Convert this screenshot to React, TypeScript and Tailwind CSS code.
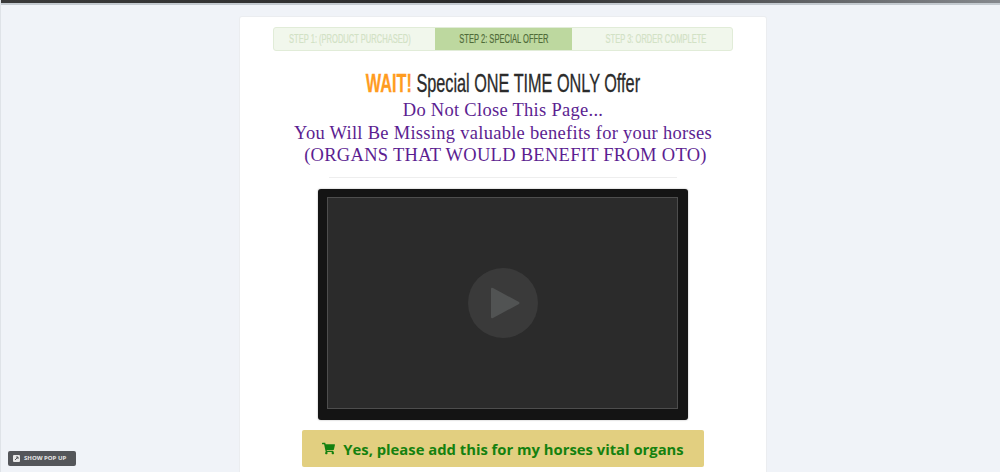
import { FaShoppingCart } from 'react-icons/fa'

const condensed = "font-['Liberation_Sans',sans-serif]"

function StepBar() {
  return (
    <div className={`flex h-[24px] w-[460px] overflow-hidden rounded-[3px] border border-[#e1ecd8] bg-[#f1f7ec] text-[13px] uppercase ${condensed}`}>
      <div className="flex w-[161px] min-w-0 shrink-0 items-center justify-center pr-[10px] text-[#d2e2c5]">
        <span className="inline-block shrink-0 origin-center scale-x-[0.58] whitespace-nowrap [-webkit-text-stroke:0.2px]">Step 1: (Product Purchased)</span>
      </div>
      <div className="flex w-[137px] min-w-0 shrink-0 items-center justify-center bg-[#bdd89f] text-[#4f6b38]">
        <span className="inline-block shrink-0 origin-center scale-x-[0.58] whitespace-nowrap [-webkit-text-stroke:0.2px]">Step 2: Special Offer</span>
      </div>
      <div className="flex min-w-0 flex-1 items-center justify-center pl-[7px] text-[#d2e2c5]">
        <span className="inline-block shrink-0 origin-center scale-x-[0.58] whitespace-nowrap [-webkit-text-stroke:0.2px]">Step 3: Order Complete</span>
      </div>
    </div>
  )
}

function VideoBox() {
  return (
    <div className="h-[231px] w-[370px] rounded-[3px] bg-[#141414] pb-[11px] pl-[9px] pr-[10px] pt-[8px] shadow-[0_0_2px_rgba(0,0,0,0.35)]">
      <div className="flex h-full items-center justify-center border border-[#4d4d4d] bg-[#2b2b2b]">
        <div className="flex h-[70px] w-[70px] items-center justify-center rounded-full bg-[#3a3a3a]">
          <svg width="30" height="34" viewBox="0 0 30 34" className="ml-[6px]">
            <path d="M2 2 L28 16 Q29 17 28 18 L2 32 Q0 33 0 31 L0 3 Q0 1 2 2 Z" fill="#515353" />
          </svg>
        </div>
      </div>
    </div>
  )
}

export default function App() {
  return (
    <div className="relative h-[472px] w-[1000px] overflow-hidden border-l border-[#dfe3e8] bg-[#f0f3f8]">
      <div className="h-[3px] bg-gradient-to-r from-[#3a3a3a] via-[#2a2a2a] to-[#85888d]" />
      <div className="h-[2px] bg-[#c4cad0]" />
      <div className="ml-[239px] mt-[12px] flex h-[600px] w-[526px] flex-col items-center rounded-[2px] bg-white pt-[10px] shadow-[0_0_0_1px_#ebedf0]">
        <StepBar />

        <h1 className={`mt-[17px] h-[30px] whitespace-nowrap text-[25px] leading-[30px] text-[#2b2b2b] ${condensed}`}>
          <span className="inline-block origin-center scale-x-[0.65] [-webkit-text-stroke:0.3px]">
            <span className="font-bold text-[#ff9c1f]">WAIT!</span> Special ONE TIME ONLY Offer
          </span>
        </h1>

        <div className="mt-[1px] text-center font-['Liberation_Serif',serif] text-[18.5px] leading-[22.7px] tracking-[0.28px] text-[#5c1e91]">
          <p>Do Not Close This Page...</p>
          <p>You Will Be Missing valuable benefits for your horses</p>
          <p>&nbsp;(ORGANS THAT WOULD BENEFIT FROM OTO)</p>
        </div>

        <hr className="mt-[10px] h-px w-[348px] border-0 bg-[#eeeeee]" />

        <div className="mt-[11px]">
          <VideoBox />
        </div>

        <button className="mt-[10px] flex h-[37px] w-[402px] items-center justify-center gap-[8px] rounded-[2px] bg-[#e2cf80] font-['Open_Sans',sans-serif] text-[14.8px] font-bold text-[#14810f]">
          <FaShoppingCart className="text-[13px]" />
          Yes, please add this for my horses vital organs
        </button>
      </div>

      <div className="absolute bottom-[6px] left-[7px] flex h-[15px] w-[68px] items-center gap-[4px] rounded-[2px] bg-[#54565a] pl-[5px] font-['Open_Sans',sans-serif] text-[6px] font-bold uppercase text-[#e8e8e8]">
        <svg width="7" height="7" viewBox="0 0 7 7">
          <rect width="7" height="7" rx="1" fill="#e8e8e8" />
          <path d="M2 5 L5 2 M3 2 H5 V4" stroke="#54565a" strokeWidth="1" fill="none" />
        </svg>
        Show Pop Up
      </div>
    </div>
  )
}
